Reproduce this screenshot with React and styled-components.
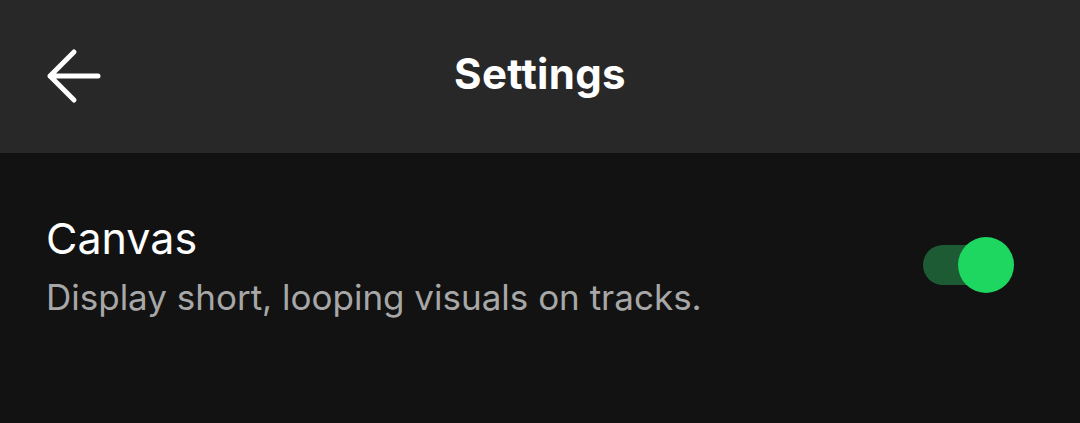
import React, { useState } from "react";
import styled, { createGlobalStyle } from "styled-components";

const GlobalStyle = createGlobalStyle`
  html, body {
    margin: 0;
    padding: 0;
    background: #121212;
  }
  body {
    font-family: "Inter", "Noto Sans", sans-serif;
    color: #fff;
  }
`;

function App() {
  const [canvasOn, setCanvasOn] = useState(true);

  return (
    <>
      <GlobalStyle />
      <Page>
        <Header>
          <BackButton aria-label="Back">
            <svg width="58" height="58" viewBox="0 0 58 58" fill="none">
              <path
                d="M53 29H5M29 5L5 29l24 24"
                stroke="#fff"
                strokeWidth="5"
                strokeLinecap="round"
                strokeLinejoin="round"
              />
            </svg>
          </BackButton>
          <Title>Settings</Title>
        </Header>
        <SettingRow>
          <SettingText>
            <SettingTitle>Canvas</SettingTitle>
            <SettingDesc>Display short, looping visuals on tracks.</SettingDesc>
          </SettingText>
          <Switch $on={canvasOn} onClick={() => setCanvasOn(!canvasOn)}>
            <Knob $on={canvasOn} />
          </Switch>
        </SettingRow>
      </Page>
    </>
  );
}

export default App;

const Page = styled.div`
  width: 1080px;
  height: 423px;
  background: #121212;
`;

const Header = styled.header`
  position: relative;
  height: 153px;
  background: #282828;
  display: flex;
  align-items: center;
  justify-content: center;
`;

const BackButton = styled.button`
  position: absolute;
  left: 45px;
  top: 47px;
  padding: 0;
  border: none;
  background: none;
  cursor: pointer;
  display: flex;
`;

const Title = styled.h1`
  margin: 0;
  font-size: 42px;
  font-weight: 700;
  letter-spacing: 0.3px;
  transform: translateY(-3px);
`;

const SettingRow = styled.div`
  display: flex;
  align-items: center;
  justify-content: space-between;
  padding: 57px 66px 0 46px;
`;

const SettingText = styled.div`
  display: flex;
  flex-direction: column;
  gap: 9px;
`;

const SettingTitle = styled.div`
  font-size: 43px;
  line-height: 56px;
  color: #fff;
`;

const SettingDesc = styled.div`
  font-size: 35px;
  line-height: 44px;
  color: #a7a7a7;
`;

const Switch = styled.div`
  position: relative;
  width: 91px;
  height: 56px;
  cursor: pointer;

  &::before {
    content: "";
    position: absolute;
    left: 0;
    top: 8px;
    width: 62px;
    height: 40px;
    border-radius: 20px;
    background: ${(p) => (p.$on ? "#1c5b34" : "#555")};
  }
`;

const Knob = styled.div`
  position: absolute;
  top: 0;
  left: ${(p) => (p.$on ? "35px" : "0")};
  width: 56px;
  height: 56px;
  border-radius: 50%;
  background: ${(p) => (p.$on ? "#1ed760" : "#b3b3b3")};
`;
